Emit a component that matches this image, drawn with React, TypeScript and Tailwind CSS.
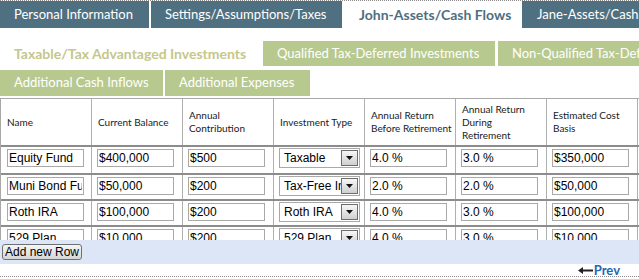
import React from 'react';

const rows = [
  { name: 'Equity Fund', balance: '$400,000', contribution: '$500', type: 'Taxable', before: '4.0 %', during: '3.0 %', basis: '$350,000' },
  { name: 'Muni Bond Fund', balance: '$50,000', contribution: '$200', type: 'Tax-Free Income', before: '2.0 %', during: '2.0 %', basis: '$50,000' },
  { name: 'Roth IRA', balance: '$100,000', contribution: '$200', type: 'Roth IRA', before: '4.0 %', during: '3.0 %', basis: '$100,000' },
  { name: '529 Plan', balance: '$10,000', contribution: '$200', type: '529 Plan', before: '4.0 %', during: '3.0 %', basis: '$10,000' },
];

const headers = [
  ['Name'],
  ['Current Balance'],
  ['Annual', 'Contribution'],
  ['Investment Type'],
  ['Annual Return', 'Before Retirement'],
  ['Annual Return', 'During', 'Retirement'],
  ['Estimated Cost', 'Basis'],
  [''],
];

function Field({ value }: { value: string }) {
  return (
    <input
      readOnly
      value={value}
      className="block w-[77px] h-[18px] border border-[#a9a9a9] bg-white px-[1px] text-[12px] text-black font-['Liberation_Sans',Arial,sans-serif] outline-none"
    />
  );
}

function Select({ value }: { value: string }) {
  return (
    <div className="flex items-center w-[81px] h-[20px] border border-[#a9a9a9] bg-white pl-[4px] pr-[1px]">
      <span className="flex-1 overflow-hidden whitespace-nowrap text-[12px] text-black font-['Liberation_Sans',Arial,sans-serif]">
        {value}
      </span>
      <span className="flex items-center justify-center w-[17px] h-[16px] border border-[#6d6d6d] bg-gradient-to-b from-[#f7f7f7] to-[#cfcfcf]">
        <svg width="7" height="4" viewBox="0 0 7 4">
          <path d="M0 0h7L3.5 4z" fill="#111" />
        </svg>
      </span>
    </div>
  );
}

export default function App() {
  return (
    <div className="w-[639px] h-[279px] overflow-hidden bg-white font-['Lato','Open_Sans',sans-serif]">
      {/* main tabs */}
      <div className="flex h-[28px] border-t border-dotted border-[#8a8a8a] text-[13px] text-white whitespace-nowrap">
        <div className="w-[149px] mr-[2px] bg-[#4f7080] pl-[14px] flex items-center">Personal Information</div>
        <div className="w-[191px] bg-[#4f7080] pl-[14px] flex items-center overflow-hidden">Settings/Assumptions/Taxes</div>
        <div className="w-[180px] bg-white pl-[17px] flex items-center font-bold text-[14px] text-[#4f6f80]">John-Assets/Cash Flows</div>
        <div className="flex-1 bg-[#4f7080] pl-[15px] flex items-center overflow-hidden">Jane-Assets/Cash Flows</div>
      </div>

      {/* sub tabs */}
      <div className="mt-[13px] flex h-[25px] text-[13px] whitespace-nowrap">
        <div className="w-[263px] pl-[14px] flex items-center font-bold text-[14px] text-[#c5c78b]">Taxable/Tax Advantaged Investments</div>
        <div className="w-[232px] mr-[3px] bg-[#b8c98f] pl-[14px] flex items-center text-white">Qualified Tax-Deferred Investments</div>
        <div className="flex-1 bg-[#b8c98f] pl-[14px] flex items-center text-white overflow-hidden">Non-Qualified Tax-Deferred Investments</div>
      </div>
      <div className="mt-[4px] flex gap-[2px] h-[26px] text-[13px] text-white whitespace-nowrap">
        <div className="w-[163px] bg-[#b8c98f] pl-[14px] flex items-center">Additional Cash Inflows</div>
        <div className="w-[145px] bg-[#b8c98f] pl-[14px] flex items-center">Additional Expenses</div>
      </div>

      {/* grid */}
      <div className="mt-[2px] h-[142px] overflow-hidden">
        <div className="w-[730px] border-t border-l border-[#a8a8a8]">
          <div className="flex h-[48px] border-b-2 border-[#8c8c8c]">
            {headers.map((lines, i) => (
              <div key={i} className="w-[91px] shrink-0 border-r border-[#b0b0b0] pl-[6px] flex flex-col justify-center whitespace-nowrap overflow-hidden text-[10px] leading-[13px] text-[#1a1a1a]">
                {lines.map((l, j) => (
                  <span key={j}>{l}</span>
                ))}
              </div>
            ))}
          </div>
          {rows.map((r, i) => (
            <div key={i} className={`flex h-[26px] ${i > 0 ? 'border-t-2 border-[#8c8c8c]' : ''}`}>
              <div className="w-[91px] shrink-0 border-r border-[#b0b0b0] pl-[6px] pt-[2px]"><Field value={r.name} /></div>
              <div className="w-[91px] shrink-0 border-r border-[#b0b0b0] pl-[5px] pt-[2px]"><Field value={r.balance} /></div>
              <div className="w-[91px] shrink-0 border-r border-[#b0b0b0] pl-[5px] pt-[2px]"><Field value={r.contribution} /></div>
              <div className="w-[91px] shrink-0 border-r border-[#b0b0b0] pl-[5px] pt-[1px]"><Select value={r.type} /></div>
              <div className="w-[91px] shrink-0 border-r border-[#b0b0b0] pl-[5px] pt-[2px]"><Field value={r.before} /></div>
              <div className="w-[91px] shrink-0 border-r border-[#b0b0b0] pl-[5px] pt-[2px]"><Field value={r.during} /></div>
              <div className="w-[91px] shrink-0 border-r border-[#b0b0b0] pl-[5px] pt-[2px]"><Field value={r.basis} /></div>
              <div className="w-[91px] shrink-0 border-r border-[#b0b0b0] pl-[5px] pt-[2px]"><Field value="" /></div>
            </div>
          ))}
        </div>
      </div>

      {/* footer bar */}
      <div className="flex items-start h-[24px] bg-[#dde6f7] px-[2px] pt-[4px]">
        <button className="h-[16px] w-[80px] p-0 whitespace-nowrap rounded-[3px] border border-[#707070] bg-gradient-to-b from-[#f6f6f6] to-[#d6d6d6] text-[12px] leading-[13px] text-black font-['Liberation_Sans',Arial,sans-serif]">
          Add new Row
        </button>
      </div>

      <div className="flex justify-end items-center h-[13px] pr-[19px] border-b border-dotted border-[#8a8a8a]">
        <a className="flex items-center gap-[1px] text-[13px] font-bold text-[#2467b5] leading-none">
          <svg width="15" height="7" viewBox="0 0 15 7">
            <path d="M0 3.5L5 0v2.5h10v2H5V7z" fill="#222" />
          </svg>
          Prev
        </a>
      </div>
    </div>
  );
}
